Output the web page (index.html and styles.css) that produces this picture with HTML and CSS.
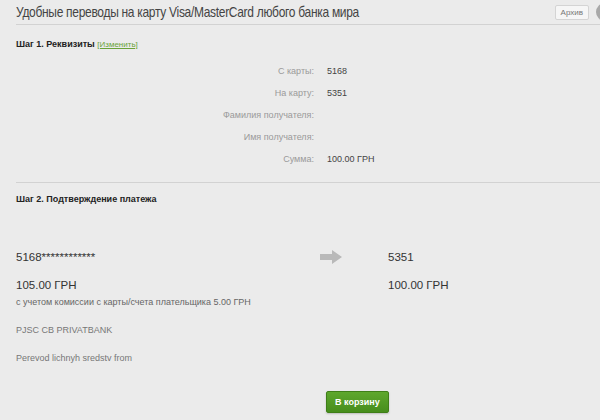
FILE: index.html
```html
<!DOCTYPE html>
<html lang="ru">
<head>
  <meta charset="UTF-8" />
  <title>Переводы на карту</title>
  <link rel="stylesheet" href="styles.css">
</head>
<body>
  <div class="page">
    <header class="head">
      <h1>Удобные переводы на карту Visa/MasterCard любого банка мира</h1>
      <button class="archive" type="button">Архив</button>
      <span class="avatar"></span>
    </header>

    <section class="step">
      <h2>Шаг 1. Реквизиты <a href="#">[Изменить]</a></h2>
      <dl class="details">
        <dt>С карты:</dt><dd>5168</dd>
        <dt>На карту:</dt><dd>5351</dd>
        <dt>Фамилия получателя:</dt><dd></dd>
        <dt>Имя получателя:</dt><dd></dd>
        <dt>Сумма:</dt><dd>100.00 ГРН</dd>
      </dl>
    </section>

    <section class="step confirm">
      <h2>Шаг 2. Подтверждение платежа</h2>
      <div class="transfer">
        <div class="side">
          <div class="card">5168************</div>
          <div class="amount">105.00 ГРН</div>
          <div class="note">с учетом комиссии с карты/счета плательщика 5.00 ГРН</div>
          <div class="bank">PJSC CB PRIVATBANK</div>
          <div class="bank">Perevod lichnyh sredstv from</div>
        </div>
        <div class="arrow">
          <svg width="22" height="14" viewBox="0 0 22 14"><path d="M0 4h12V0l10 7-10 7v-4H0z" fill="#b9b9b9"/></svg>
        </div>
        <div class="side">
          <div class="card">5351</div>
          <div class="amount">100.00 ГРН</div>
        </div>
      </div>
    </section>

    <div class="actions">
      <button class="cart" type="button">В корзину</button>
    </div>
  </div>
</body>
</html>
```

FILE: styles.css
```css
:root {
  --bg: #ebebeb; --text: #3a3a3a; --muted: #9a9a9a; --line: #d2d2d2;
  --green: #4f9a22; --green-dark: #3f821a;
}
body { margin: 0; background: var(--bg); font-family: "Liberation Sans", Arial, sans-serif; color: var(--text); }
.page { padding: 0 0 0 16px; overflow: hidden; height: 420px; }

.head { display: flex; align-items: center; height: 24px; border-bottom: 1px solid var(--line); }
.head h1 { flex: 1; margin: 0; font-size: 12px; letter-spacing: -0.3px; font-weight: normal; color: #444; transform: scaleY(1.2); }
.archive { font: 8px "Liberation Sans", Arial, sans-serif; color: #777; background: #f6f6f6; border: 1px solid #d4d4d4; border-radius: 2px; padding: 2px 5px; margin-right: 7px; }
.avatar { width: 18px; height: 18px; border-radius: 50%; background: #a8a8a8; margin-right: -14px; }

.step h2 { margin: 0; font-size: 9px; font-weight: bold; color: #222; }
.step h2 a { font-weight: normal; font-size: 8px; color: #6aa33a; }
.step:first-of-type { padding: 14px 0 17px; border-bottom: 1px solid var(--line); }

.details { display: grid; grid-template-columns: 298px 1fr; column-gap: 13px; row-gap: 11px; margin: 17px 0 0; font-size: 9px; line-height: 11px; }
.details dt { text-align: right; color: var(--muted); }
.details dd { margin: 0; color: #444; }

.confirm { padding-top: 11px; }
.transfer { display: grid; grid-template-columns: 304px 68px 1fr; margin-top: 46px; }
.card { font-size: 11.5px; line-height: 14px; color: #333; }
.amount { font-size: 11.5px; line-height: 14px; color: #333; margin-top: 14px; }
.note { font-size: 9px; color: #666; margin-top: 5px; }
.bank { font-size: 9px; color: #777; margin-top: 18px; }

.actions { padding: 28px 0 0 310px; }
.cart { font: bold 9px "Liberation Sans", Arial, sans-serif; color: #fff; background: linear-gradient(#5ea72d, #478e1d); border: 1px solid #3f7f18; border-radius: 2px; padding: 5px 8px; box-shadow: 0 1px 2px rgba(0,0,0,0.2); }
```
